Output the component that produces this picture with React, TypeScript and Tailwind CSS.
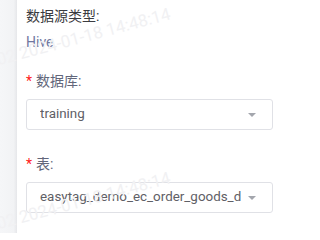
const font = { fontFamily: "Roboto, 'Noto Sans CJK SC', sans-serif" };

function Caret() {
  return (
    <svg width="10" height="6" viewBox="0 0 10 6" className="shrink-0">
      <path d="M1 1h8L5 5z" fill="#a3a6ad" />
    </svg>
  );
}

function Select({ value }: { value: string }) {
  return (
    <div className="flex h-[31px] w-[247px] items-center justify-between gap-[6px] rounded-[3px] border border-[#e0e1e6] bg-white pl-[13px] pr-[15px]">
      <span className="overflow-hidden whitespace-nowrap text-[13.4px] text-[#5f6066]">{value}</span>
      <Caret />
    </div>
  );
}

function Watermark({ className }: { className: string }) {
  return (
    <div
      className={`pointer-events-none absolute origin-left -rotate-[15deg] whitespace-nowrap text-[17px] text-[#f1f1f3] ${className}`}
    >
      b02 2024-01-18 14:48:14
    </div>
  );
}

export default function App() {
  return (
    <div className="relative flex h-[233px] w-[293px] overflow-hidden bg-white" style={font}>
      <div className="w-[17px] shrink-0 bg-gradient-to-r from-[#f5f6f8] via-[#f2f3f5] via-80% to-[#e6e7ea]" />
      <div className="flex flex-col pl-[9px] pt-[7px]">
        <div className="text-[14px] leading-[18px] text-[#3a3b40]">数据源类型:</div>
        <div className="mt-[8px] text-[14px] leading-[18px] text-[#7077a0]">Hive</div>
        <div className="mt-[21px] flex items-center text-[14px] leading-[18px] text-[#62667a]">
          <span className="mr-[4px] text-[#ff1a1a]">*</span>
          数据库:
        </div>
        <div className="mt-[9px]">
          <Select value="training" />
        </div>
        <div className="mt-[25px] flex items-center text-[14px] leading-[18px] text-[#62667a]">
          <span className="mr-[4px] text-[#ff1a1a]">*</span>
          表:
        </div>
        <div className="mt-[9px]">
          <Select value="easytag_demo_ec_order_goods_d" />
        </div>
      </div>
      <Watermark className="left-[-12px] top-[50px]" />
      <Watermark className="left-[-12px] top-[214px]" />
    </div>
  );
}
